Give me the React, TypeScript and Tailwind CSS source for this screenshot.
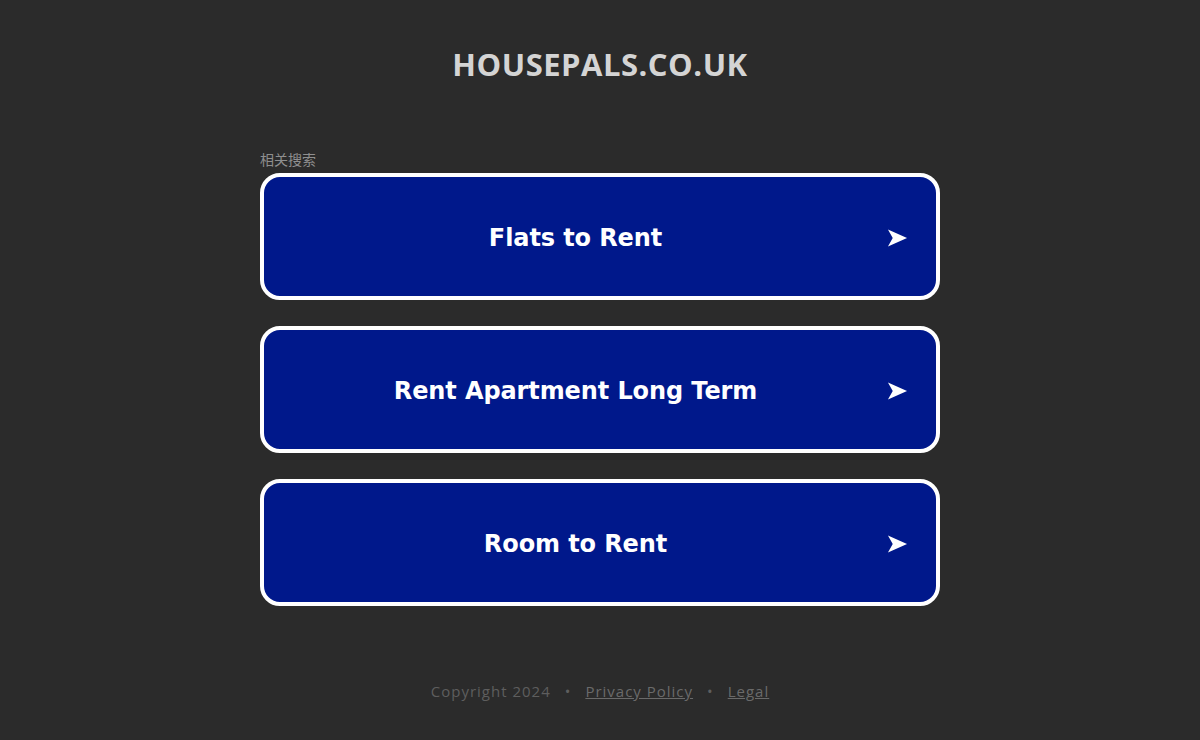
export default function App() {
  const links = ["Flats to Rent", "Rent Apartment Long Term", "Room to Rent"];
  return (
    <div className="min-h-[740px] w-full bg-[#2b2b2b] flex flex-col items-center">
      <h1 className="mt-[44px] text-[31px] leading-[40px] font-bold text-[#d4d4d4] font-['Open_Sans',sans-serif] tracking-[0.5px]">
        HOUSEPALS.CO.UK
      </h1>
      <div className="mt-[66px] w-[680px]">
        <div className="text-[14px] leading-[18px] text-[#8f8f8f] font-['Noto_Sans_CJK_SC',sans-serif] mb-[5px]">
          相关搜索
        </div>
        <div className="flex flex-col gap-[26px]">
          {links.map(l => (
            <a
              key={l}
              href="#"
              className="h-[127px] rounded-[20px] border-4 border-white bg-[#00188b] flex items-center pr-[28px]"
            >
              <span className="flex-1 text-center text-white font-bold text-[24px] leading-[30px] font-['DejaVu_Sans',Verdana,sans-serif] tracking-[-0.1px] pt-[2px]">
                {l}
              </span>
              <svg width="21" height="20" viewBox="0 0 22 20" className="mt-[2px]">
                <path d="M1 1 L21 10 L1 19 L6 10 Z" fill="white" />
              </svg>
            </a>
          ))}
        </div>
      </div>
      <div className="mt-[74px] text-[15px] text-[#5e5e5e] font-['Open_Sans',sans-serif] tracking-[1px] flex items-center gap-[14px]">
        <span>Copyright 2024</span>
        <span>•</span>
        <a href="#" className="underline text-[#6a6a6a]">Privacy Policy</a>
        <span>•</span>
        <a href="#" className="underline text-[#6a6a6a]">Legal</a>
      </div>
    </div>
  );
}
